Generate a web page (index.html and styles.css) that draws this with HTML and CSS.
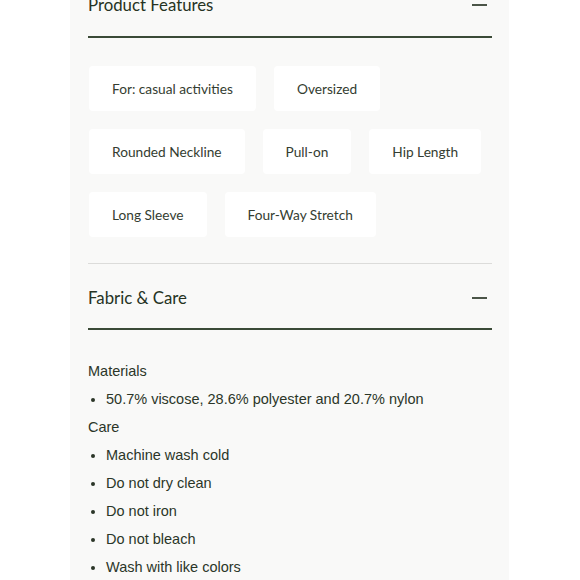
FILE: index.html
```html
<!DOCTYPE html>
<html>
<head>
<meta charset="utf-8">
<link rel="stylesheet" href="styles.css">
</head>
<body>
<div class="panel">
  <section class="section first">
    <div class="header">
      <h2 class="title">Product Features</h2>
      <span class="minus"></span>
    </div>
    <div class="chips">
      <span class="chip">For: casual activities</span>
      <span class="chip">Oversized</span>
      <span class="chip">Rounded Neckline</span>
      <span class="chip">Pull-on</span>
      <span class="chip">Hip Length</span>
      <span class="chip">Long Sleeve</span>
      <span class="chip">Four-Way Stretch</span>
    </div>
  </section>
  <section class="section">
    <div class="header">
      <h2 class="title">Fabric &amp; Care</h2>
      <span class="minus"></span>
    </div>
    <div class="care">
      <p class="label">Materials</p>
      <ul class="list">
        <li>50.7% viscose, 28.6% polyester and 20.7% nylon</li>
      </ul>
      <p class="label">Care</p>
      <ul class="list">
        <li>Machine wash cold</li>
        <li>Do not dry clean</li>
        <li>Do not iron</li>
        <li>Do not bleach</li>
        <li>Wash with like colors</li>
      </ul>
    </div>
  </section>
</div>
</body>
</html>
```

FILE: styles.css
```css
html, body {
  margin: 0;
  padding: 0;
  background: #ffffff;
}
body {
  overflow: hidden;
  height: 580px;
}
.panel {
  margin-left: 70px;
  width: 439px;
  background: #f9f9f8;
  padding: 0 17px 0 18px;
  box-sizing: border-box;
  min-height: 620px;
}
.section.first {
  margin-top: -28px;
  border-bottom: 1px solid #dcdcda;
}
.header {
  height: 66px;
  box-sizing: border-box;
  padding-top: 3px;
  display: flex;
  align-items: center;
  justify-content: space-between;
  border-bottom: 2px solid #3b4a37;
}
.section.first .header {
  padding-top: 1px;
}
.title {
  margin: 0;
  font-family: Lato, "Liberation Sans", sans-serif;
  font-weight: 400;
  font-size: 16.8px;
  color: #263323;
}
.minus {
  width: 15px;
  height: 2px;
  background: #4b5548;
  margin-right: 5px;
}
.chips {
  display: flex;
  flex-wrap: wrap;
  gap: 18px 18px;
  padding: 28px 0 26px 1px;
}
.chip {
  height: 45px;
  display: flex;
  align-items: center;
  padding: 0 23px;
  background: #ffffff;
  border-radius: 4px;
  font-family: Lato, "Liberation Sans", sans-serif;
  font-size: 13.7px;
  color: #343d31;
}
.care {
  padding-top: 27px;
  font-family: "Liberation Sans", Arial, sans-serif;
  font-size: 14.5px;
  color: #2b3628;
}
.label {
  margin: 0;
  line-height: 28px;
}
.list {
  margin: 0;
  padding: 0 0 0 18px;
  line-height: 28px;
}
```
